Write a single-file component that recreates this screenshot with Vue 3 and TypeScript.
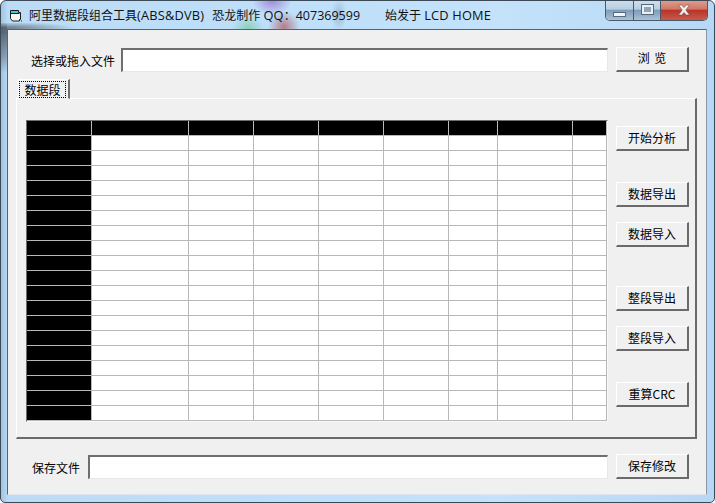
<script setup lang="ts">
const widths: number[] = [65, 97, 65, 65, 65, 65, 49, 75, 34]
const rowCount = 20
const cells = Array.from({ length: rowCount * widths.length }, (_, i) => {
  const column = i % widths.length
  const row = Math.floor(i / widths.length)
  return { id: i, dark: row === 0 || column === 0 }
})
const columns = widths.map((w) => `${w}px`).join(' ')
</script>

<template>
  <div class="window">
    <div class="glow"></div>
    <div class="smear"></div>
    <header class="titlebar">
      <svg class="appicon" width="14" height="14" viewBox="0 0 14 14">
        <path d="M1.500 1.500h8v2h2v7h-1v1.500h-7l-2-2.500z" fill="#f8f8f0" stroke="#161c24" />
        <path d="M2 2h7v2H2z" fill="#35d0e6" />
        <path d="M1.500 4.500h9" stroke="#161c24" />
        <path d="M12 11h1v2h-1z" fill="#6a7886" />
      </svg>
      <span class="title">阿里数据段组合工具<span class="latin">(ABS&amp;DVB)</span></span>
      <span class="title author">恐龙制作 <span class="latin">QQ</span>：<span class="digits">407369599</span></span>
      <span class="title second">始发于 <span class="latin">LCD HOME</span></span>
      <div class="controls">
        <div class="ctl min"><i class="minbar"></i></div>
        <div class="ctl max"><i class="maxbox"></i></div>
        <div class="ctl close">
          <svg width="16" height="12" viewBox="0 0 16 12">
            <path d="M2.500 1h3.400L8 3.600 10.100 1h3.400L9.800 6l3.700 5h-3.400L8 8.400 5.900 11H2.500l3.700-5z" fill="#f4f0ee" stroke="#6a3a34" stroke-width=".5" />
          </svg>
        </div>
      </div>
    </header>

    <main class="client">
      <section class="filerow">
        <label class="lbl lbl-open">选择或拖入文件</label>
        <div class="field"></div>
        <button class="btn wide">浏 览</button>
      </section>

      <div class="tabs">
        <div class="tab"><span class="tabtext">数据段</span></div>
      </div>

      <section class="pane">
        <div class="grid" :style="{ gridTemplateColumns: columns }">
          <div v-for="c in cells" :key="c.id" class="cell" :class="{ dark: c.dark }"></div>
        </div>
        <div class="actions">
          <button class="btn">开始分析</button>
          <div class="group g1">
            <button class="btn">数据导出</button>
            <button class="btn">数据导入</button>
          </div>
          <div class="group g2">
            <button class="btn">整段导出</button>
            <button class="btn">整段导入</button>
          </div>
          <button class="btn g3">重算CRC</button>
        </div>
      </section>

      <section class="saverow">
        <label class="lbl lbl-save">保存文件</label>
        <div class="field"></div>
        <button class="btn">保存修改</button>
      </section>
    </main>
  </div>
</template>

<style>
html,
body {
  margin: 0;
  background: #fff;
}
</style>

<style scoped>
.window {
  position: relative;
  box-sizing: border-box;
  width: 715px;
  height: 503px;
  display: flex;
  flex-direction: column;
  overflow: hidden;
  border: 1px solid #3c4a58;
  border-radius: 6px 6px 5px 5px;
  background: linear-gradient(90deg, #9fc4e4 0, #bcdcf6 1%, #bfe0fa 45%, #c4e2fa 70%, #b7d8f5 100%);
  font-family: "Open Sans", "Noto Sans CJK SC", sans-serif;
  color: #000;
}
.glow {
  position: absolute;
  left: 225px;
  top: 0;
  width: 130px;
  height: 28px;
  background:
    radial-gradient(ellipse 16px 14px at 22px 28px, rgba(120, 200, 165, 0.75), transparent),
    radial-gradient(ellipse 16px 16px at 58px 26px, rgba(175, 100, 110, 0.8), transparent),
    radial-gradient(ellipse 20px 14px at 46px 0, rgba(155, 110, 205, 0.75), transparent),
    radial-gradient(ellipse 8px 16px at 113px 14px, rgba(120, 140, 160, 0.45), transparent);
}
.smear {
  position: absolute;
  left: 0;
  top: 22px;
  width: 80px;
  height: 50px;
  background:
    radial-gradient(ellipse 70px 6px at 5px 5px, rgba(40, 45, 50, 0.55), transparent),
    linear-gradient(180deg, transparent 0, rgba(50, 55, 60, 0.65) 20%, rgba(50, 55, 60, 0.3) 70%, transparent 100%) 0 0 / 6px 100% no-repeat;
}
.titlebar {
  position: relative;
  flex: none;
  height: 28px;
  display: flex;
  align-items: center;
  padding-left: 8px;
}
.appicon {
  flex: none;
  margin-top: 1px;
}
.title {
  margin-left: 6px;
  margin-top: -1px;
  font-size: 12px;
  white-space: nowrap;
  color: #101010;
}
.latin {
  font-size: 12.8px;
  letter-spacing: 0.2px;
}
.digits {
  font-size: 12.5px;
}
.author {
  margin-left: 8px;
}
.second {
  margin-left: 25px;
}
.controls {
  position: absolute;
  top: -1px;
  right: 6px;
  display: flex;
  height: 20px;
  border: 1px solid #4a5a6c;
  border-top: none;
  border-radius: 0 0 5px 5px;
  overflow: hidden;
}
.ctl {
  display: flex;
  align-items: center;
  justify-content: center;
  height: 100%;
}
.min,
.max {
  background: linear-gradient(180deg, #cfe0ee 0, #b8cfe2 45%, #7f9cb8 52%, #a9c2d6 100%);
}
.min {
  width: 27px;
  border-right: 1px solid #4a5a6c;
}
.max {
  width: 26px;
  border-right: 1px solid #4a5a6c;
}
.close {
  width: 46px;
  background: linear-gradient(180deg, #e0a090 0, #d07868 45%, #b8352a 52%, #c85a4a 100%);
}
.minbar {
  display: block;
  width: 11px;
  height: 3px;
  margin-top: 8px;
  background: #f2f5f8;
  border: 1px solid #5a6a7a;
}
.maxbox {
  display: block;
  box-sizing: border-box;
  width: 11px;
  height: 9px;
  margin-top: -1px;
  background: #8ea6ba;
  border: 2px solid #e8eef4;
  outline: 1px solid #5a6a7a;
}
.client {
  flex: none;
  box-sizing: border-box;
  width: 700px;
  height: 466px;
  margin-left: 6px;
  padding: 16px 0 0 8px;
  background: #f0f0f0;
  border: 1px solid #57626c;
  border-bottom-color: #dfe6ee;
  border-right-color: #8b97a4;
  position: relative;
}
.lbl {
  font-family: "Noto Sans CJK SC", sans-serif;
  font-size: 12px;
  white-space: nowrap;
}
.filerow {
  display: flex;
  align-items: center;
  height: 26px;
}
.lbl-open {
  margin-left: 15px;
  width: 90px;
  margin-top: 2px;
}
.field {
  flex: none;
  box-sizing: border-box;
  height: 24px;
  background: #fff;
  border: 1px solid;
  border-color: #6e6e6e #e8e8e8 #e8e8e8 #6e6e6e;
  border-top-width: 2px;
  border-left-width: 2px;
}
.filerow .field {
  width: 487px;
  margin-top: 2px;
}
.btn {
  flex: none;
  box-sizing: border-box;
  display: block;
  width: 73px;
  height: 25px;
  padding: 0 0 2px;
  margin: 0;
  background: #f0f0f0;
  border: 1px solid;
  border-color: #fff #6a6a6a #6a6a6a #fff;
  border-right-width: 2px;
  border-bottom-width: 2px;
  font: 12px "Noto Sans CJK SC", sans-serif;
  color: #000;
}
.wide {
  word-spacing: 2px;
}
.filerow .btn {
  margin-left: 8px;
}
.tabs {
  display: flex;
  height: 20px;
  margin-top: 7px;
  padding-left: 2px;
}
.tab {
  box-sizing: border-box;
  width: 52px;
  height: 20px;
  padding: 1px 2px 0 0;
  background: #f0f0f0;
  border: 1px solid;
  border-color: #fff #6e6e6e transparent #fff;
  border-right-width: 2px;
  font-family: "Noto Sans CJK SC", sans-serif;
  font-size: 12px;
  position: relative;
  z-index: 1;
}
.tabtext {
  display: block;
  height: 17px;
  line-height: 17px;
  text-align: center;
  outline: 1px dotted #000;
  outline-offset: -1px;
}
.pane {
  box-sizing: border-box;
  width: 681px;
  height: 341px;
  margin-top: -1px;
  padding: 22px 0 0 10px;
  display: flex;
  background: #f0f0f0;
  border: 1px solid;
  border-color: #fff #6a6a6a #6a6a6a #fff;
  border-right-width: 2px;
  border-bottom-width: 2px;
}
.grid {
  flex: none;
  display: grid;
  align-self: flex-start;
  grid-auto-rows: 15px;
  height: 300px;
  margin-left: -1px;
  margin-top: -1px;
  border-top: 1px solid #6e6e6e;
  border-left: 1px solid #6e6e6e;
  border-right: 1px solid #f8f8f8;
  border-bottom: 1px solid #f8f8f8;
}
.cell {
  box-sizing: border-box;
  background: #fff;
  border-right: 1px solid #b8b8b8;
  border-bottom: 1px solid #b8b8b8;
}
.cell.dark {
  background: #000;
}
.actions {
  margin-left: 8px;
  margin-top: 5px;
  display: flex;
  flex-direction: column;
}
.group {
  display: flex;
  flex-direction: column;
  gap: 15px;
}
.g1 {
  margin-top: 31px;
}
.g2 {
  margin-top: 39px;
}
.g3 {
  margin-top: 31px;
}
.saverow {
  display: flex;
  align-items: flex-start;
  height: 26px;
  margin-top: 15px;
}
.lbl-save {
  margin-left: 16px;
  width: 56px;
  margin-top: 5px;
}
.saverow .field {
  width: 520px;
  margin-top: 1px;
}
.saverow .btn {
  margin-left: 8px;
}
</style>
